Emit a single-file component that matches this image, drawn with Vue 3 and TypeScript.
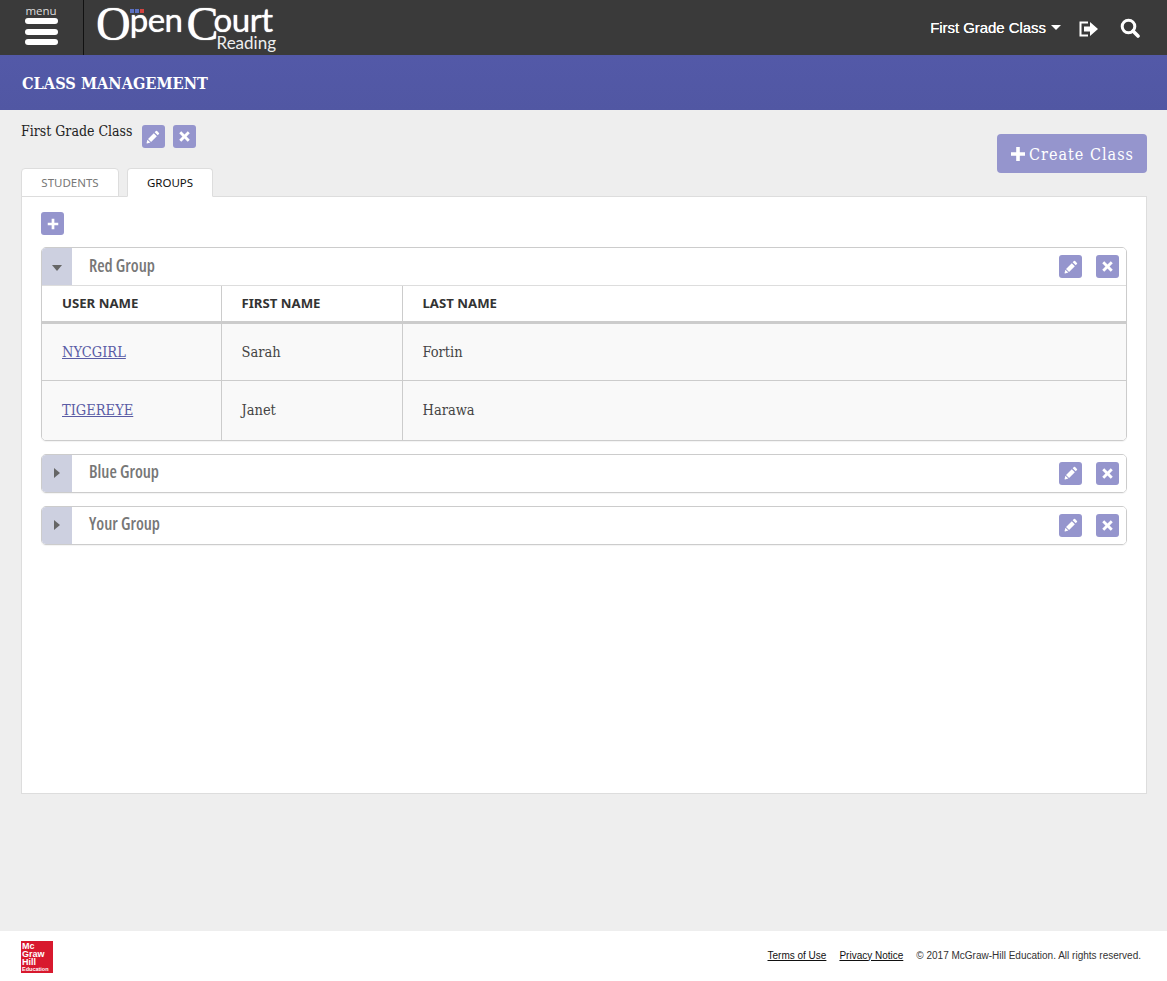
<script setup lang="ts">
interface Student {
  userName: string;
  firstName: string;
  lastName: string;
}

interface Group {
  name: string;
  open: boolean;
  students: Student[];
}

const groups: Group[] = [
  {
    name: 'Red Group',
    open: true,
    students: [
      { userName: 'NYCGIRL', firstName: 'Sarah', lastName: 'Fortin' },
      { userName: 'TIGEREYE', firstName: 'Janet', lastName: 'Harawa' },
    ],
  },
  { name: 'Blue Group', open: false, students: [] },
  { name: 'Your Group', open: false, students: [] },
];

const pencil =
  'M11.3 1.2a1 1 0 0 1 1.4 0l2.1 2.1a1 1 0 0 1 0 1.4l-1.4 1.4-3.5-3.5zM8.9 3.6l3.5 3.5-6.6 6.6-3.5-3.5zM1.6 11l3.4 3.4-3.7.9a.5.5 0 0 1-.6-.6z';
const cross = 'M4 1.500 8 5.500l4-4 2.500 2.500-4 4 4 4-2.500 2.500-4-4-4 4L1.500 12l4-4-4-4z';
const plus = 'M6.200 1h3.600v5.200H15v3.600H9.800V15H6.200V9.800H1V6.200h5.200z';
</script>

<template>
  <div class="page">
    <header class="topbar">
      <div class="menu">
        <span class="menu__label">menu</span>
        <span class="menu__bar"></span>
        <span class="menu__bar"></span>
        <span class="menu__bar"></span>
      </div>
      <div class="logo">
        <span class="logo__flag"><i></i><i></i><i></i></span>
        <span class="logo__name"><b>O</b>pen<b class="logo__c">C</b>ourt</span>
        <span class="logo__sub">Reading</span>
      </div>
      <div class="topbar__right">
        <span class="class-select">First Grade Class<i class="caret"></i></span>
        <svg class="signout" width="20" height="16" viewBox="0 0 20 16">
          <path d="M9 1.500H1.500v13H9" fill="none" stroke="#fff" stroke-width="2" />
          <path d="M5 5.500h6V1l8 7-8 7v-4.500H5z" fill="#fff" />
        </svg>
        <svg class="search" width="20" height="20" viewBox="0 0 20 20">
          <circle cx="8.500" cy="8.500" r="6.300" fill="none" stroke="#fff" stroke-width="3" />
          <path d="M13 13l5 5" stroke="#fff" stroke-width="3.600" stroke-linecap="round" />
        </svg>
      </div>
    </header>

    <div class="band">
      <h1 class="band__title">CLASS MANAGEMENT</h1>
    </div>

    <main class="content">
      <div class="content__top">
        <div>
          <div class="class-row">
            <span class="class-row__name">First Grade Class</span>
            <button class="icon-btn"><svg width="14" height="14" viewBox="0 0 16 16"><path :d="pencil" /></svg></button>
            <button class="icon-btn"><svg width="13" height="13" viewBox="0 0 16 16"><path :d="cross" /></svg></button>
          </div>
          <div class="tabs">
            <span class="tab">STUDENTS</span>
            <span class="tab tab--active">GROUPS</span>
          </div>
        </div>
        <button class="create-btn">
          <svg width="16" height="16" viewBox="0 0 16 16"><path :d="plus" /></svg>
          <span>Create Class</span>
        </button>
      </div>

      <section class="panel">
        <button class="icon-btn add-btn"><svg width="12" height="12" viewBox="0 0 16 16"><path :d="plus" /></svg></button>

        <div v-for="group in groups" :key="group.name" class="group">
          <div class="group__head">
            <span class="group__toggle">
              <i :class="group.open ? 'arrow-down' : 'arrow-right'"></i>
            </span>
            <span class="group__name">{{ group.name }}</span>
            <button class="icon-btn"><svg width="14" height="14" viewBox="0 0 16 16"><path :d="pencil" /></svg></button>
            <button class="icon-btn"><svg width="13" height="13" viewBox="0 0 16 16"><path :d="cross" /></svg></button>
          </div>
          <table v-if="group.open" class="group__table">
            <thead>
              <tr>
                <th class="col-user">USER NAME</th>
                <th class="col-first">FIRST NAME</th>
                <th>LAST NAME</th>
              </tr>
            </thead>
            <tbody>
              <tr v-for="s in group.students" :key="s.userName">
                <td><a href="#">{{ s.userName }}</a></td>
                <td>{{ s.firstName }}</td>
                <td>{{ s.lastName }}</td>
              </tr>
            </tbody>
          </table>
        </div>
      </section>
    </main>

    <footer class="footer">
      <div class="mh-logo">
        <span>Mc</span><span>Graw</span><span>Hill</span><span class="mh-logo__small">Education</span>
      </div>
      <div class="footer__links">
        <a href="#">Terms of Use</a>
        <a href="#">Privacy Notice</a>
        <span>© 2017 McGraw-Hill Education. All rights reserved.</span>
      </div>
    </footer>
  </div>
</template>

<style>
body {
  background: #eee;
}
</style>

<style scoped>
.page {
  display: flex;
  flex-direction: column;
  min-height: 981px;
  background: #eee;
  font-family: 'Liberation Sans', Arial, sans-serif;
}

.topbar {
  display: flex;
  align-items: stretch;
  height: 55px;
  background: #3a3a3a;
  color: #fff;
}

.menu {
  display: flex;
  flex-direction: column;
  align-items: center;
  gap: 5px;
  box-sizing: border-box;
  width: 84px;
  padding: 0 1px 0 0;
  border-right: 1px solid #111;
}

.menu__label {
  height: 13px;
  margin: 4px 0 -4px;
  font-family: 'Open Sans', sans-serif;
  font-size: 11.500px;
  line-height: 13px;
  color: #ddd;
}

.menu__bar {
  flex: none;
  width: 33px;
  height: 6px;
  border-radius: 3px;
  background: #fff;
}

.menu__bar:last-child {
  margin-top: -1px;
}

.logo {
  position: relative;
  width: 190px;
  margin-left: 12px;
}

.logo__name {
  position: absolute;
  left: 0;
  top: -3px;
  font-family: Lato, sans-serif;
  font-size: 33px;
  line-height: 38px;
  letter-spacing: -0.500px;
  white-space: nowrap;
  color: #fff;
  text-shadow: 0 0 1px #fff;
}

.logo__name b {
  position: relative;
  top: 8px;
  font-family: 'Liberation Serif', serif;
  font-size: 48px;
  line-height: 38px;
  font-weight: 400;
  letter-spacing: -1px;
}

.logo__name .logo__c {
  margin-left: 4px;
  margin-right: -4px;
}

.logo__flag {
  position: absolute;
  left: 34px;
  top: 9px;
  z-index: 1;
  display: flex;
  gap: 1px;
}

.logo__flag i {
  width: 4px;
  height: 4px;
  background: #5a6fc0;
}

.logo__flag i:last-child {
  background: #d2433f;
}

.logo__sub {
  position: absolute;
  right: 10px;
  top: 33px;
  font-family: Lato, sans-serif;
  font-size: 17px;
  line-height: 20px;
  color: #eee;
}

.topbar__right {
  display: flex;
  align-items: center;
  margin-left: auto;
  padding-right: 27px;
}

.class-select {
  display: flex;
  align-items: center;
  font-size: 15px;
  letter-spacing: -0.050px;
  text-shadow: 0 0 0.500px #fff;
}

.caret {
  width: 0;
  height: 0;
  margin-left: 5px;
  border-top: 5px solid #fff;
  border-left: 5px solid transparent;
  border-right: 5px solid transparent;
}

.signout {
  margin: 3px 0 0 18px;
}

.search {
  margin-left: 21px;
}

.band {
  display: flex;
  align-items: center;
  box-sizing: border-box;
  height: 55px;
  padding: 1px 0 0 22px;
  background: linear-gradient(#5359a8, #5157a3);
}

.band__title {
  margin: 0;
  font-family: 'DejaVu Serif', serif;
  font-size: 16.200px;
  font-stretch: condensed;
  font-weight: 700;
  color: #fff;
}

.content {
  flex: 1;
  padding: 15px 20px 137px 21px;
}

.content__top {
  display: flex;
  justify-content: space-between;
  align-items: flex-start;
}

.class-row {
  display: flex;
  align-items: flex-start;
  gap: 8px;
  height: 23px;
  margin-bottom: 20px;
}

.class-row__name {
  margin-right: 1px;
  font-family: 'DejaVu Serif', serif;
  font-size: 14px;
  font-stretch: condensed;
  line-height: 13px;
  color: #222;
}

.icon-btn {
  display: inline-flex;
  flex: none;
  align-items: center;
  justify-content: center;
  width: 23px;
  height: 23px;
  padding: 0;
  border: 0;
  border-radius: 3px;
  background: #9595cd;
}

.icon-btn svg {
  fill: #fff;
}

.tabs {
  display: flex;
  gap: 8px;
  height: 28px;
}

.tab {
  box-sizing: border-box;
  width: 98px;
  height: 29px;
  border: 1px solid #ddd;
  border-radius: 4px 4px 0 0;
  background: #fff;
  font-family: 'Noto Sans', sans-serif;
  font-size: 11.500px;
  line-height: 28px;
  text-align: center;
  color: #777;
}

.tab--active {
  position: relative;
  z-index: 1;
  width: 86px;
  border-bottom-color: #fff;
  color: #111;
}

.create-btn {
  display: flex;
  align-items: center;
  justify-content: center;
  gap: 3px;
  width: 150px;
  height: 39px;
  margin-top: 9px;
  padding: 1px 0 0;
  border: 0;
  border-radius: 4px;
  background: #9595cd;
  font-family: 'DejaVu Serif', serif;
  font-size: 16px;
  font-stretch: condensed;
  letter-spacing: 1px;
  color: #fff;
}

.create-btn svg {
  fill: #fff;
}

.panel {
  box-sizing: border-box;
  height: 598px;
  padding: 15px 19px;
  border: 1px solid #ddd;
  background: #fff;
}

.add-btn {
  display: flex;
  margin-bottom: 12px;
}

.group {
  margin-bottom: 13px;
  overflow: hidden;
  border: 1px solid #ccc;
  border-radius: 5px;
  box-shadow: 0 1px 1px rgba(0, 0, 0, 0.05);
}

.group__head {
  display: flex;
  align-items: center;
  gap: 13px;
  height: 37px;
  padding-right: 7px;
  background: #fff;
}

.group__toggle {
  display: flex;
  flex: none;
  align-items: center;
  justify-content: center;
  align-self: stretch;
  width: 30px;
  background: #cdd0e0;
}

.arrow-down {
  margin-top: 2px;
  border-top: 6px solid #666;
  border-left: 5px solid transparent;
  border-right: 5px solid transparent;
}

.arrow-right {
  border-left: 6px solid #666;
  border-top: 5px solid transparent;
  border-bottom: 5px solid transparent;
}

.group__name {
  flex: 1;
  margin: -3px 0 0 4px;
  font-family: 'Open Sans', sans-serif;
  font-size: 17px;
  font-stretch: 75%;
  font-weight: 600;
  color: #777;
}

.group__head .icon-btn + .icon-btn {
  margin-left: 1px;
}

.group__table {
  width: 100%;
  border-collapse: collapse;
  table-layout: fixed;
}

.group__table th,
.group__table td {
  box-sizing: border-box;
  padding: 0 0 0 20px;
  border-left: 1px solid #ccc;
  text-align: left;
}

.group__table th:first-child,
.group__table td:first-child {
  border-left: 0;
}

.group__table th {
  height: 37px;
  padding-bottom: 2px;
  border-top: 1px solid #ddd;
  border-bottom: 3px solid #ccc;
  background: #fff;
  font-family: 'Noto Sans', sans-serif;
  font-size: 13.200px;
  font-weight: 700;
  color: #333;
}

.col-user {
  width: 179px;
}

.col-first {
  width: 181px;
}

.group__table td {
  height: 58px;
  padding-bottom: 1px;
  border-bottom: 1px solid #ccc;
  background: #f9f9f9;
  font-family: 'DejaVu Serif', serif;
  font-size: 14.500px;
  font-stretch: condensed;
  color: #444;
}

.group__table tr:last-child td {
  height: 59px;
  border-bottom: 0;
}

.group__table a {
  color: #5a5ca5;
}

.footer {
  display: flex;
  align-items: center;
  justify-content: space-between;
  height: 50px;
  padding: 0 26px 0 21px;
  background: #fff;
}

.mh-logo {
  display: flex;
  flex-direction: column;
  box-sizing: border-box;
  width: 32px;
  height: 32px;
  margin-top: 2px;
  padding: 1px 1px 0 1px;
  background: #d8192e;
  font-size: 9px;
  font-weight: 700;
  line-height: 8px;
  color: #fff;
}

.mh-logo__small {
  font-size: 5.500px;
  line-height: 7px;
}

.footer__links {
  display: flex;
  gap: 13px;
  margin-bottom: 2px;
  font-size: 10px;
  color: #333;
}

.footer__links a {
  color: #111;
}
</style>
